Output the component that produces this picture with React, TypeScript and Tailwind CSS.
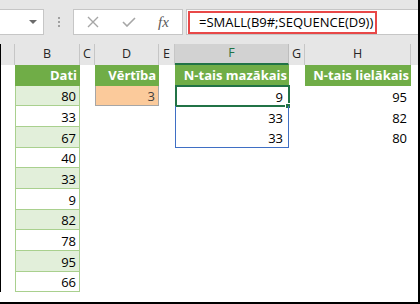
const cols = [
  { key: "A", w: "w-[14px]" },
  { key: "B", w: "w-[65px]" },
  { key: "C", w: "w-[15px]" },
  { key: "D", w: "w-[64px]" },
  { key: "E", w: "w-[16px]" },
  { key: "F", w: "w-[114px]" },
  { key: "G", w: "w-[16px]" },
  { key: "H", w: "w-[106px]" },
];

const dati = [80, 33, 67, 40, 33, 9, 82, 78, 95, 66];
const smallest = [9, 33, 33];
const largest = [95, 82, 80];

function Toolbar() {
  return (
    <div className="flex h-[44px] items-start bg-[#e6e6e6] pt-[9px]">
      <div className="relative flex h-[26px] w-[44px] items-center justify-end border border-l-0 border-[#c6c6c6] bg-white pr-[6px]">
        <span className="h-0 w-0 border-x-[4px] border-t-[4px] border-x-transparent border-t-[#6b6b6b]" />
      </div>
      <div className="ml-[14px] flex flex-col gap-[2px] pt-[8px]">
        <span className="h-[2px] w-[2px] bg-[#a0a0a0]" />
        <span className="h-[2px] w-[2px] bg-[#a0a0a0]" />
        <span className="h-[2px] w-[2px] bg-[#a0a0a0]" />
      </div>
      <div className="ml-[13px] flex h-[26px] w-[110px] items-center border border-[#c6c6c6] bg-white">
        <svg className="ml-[13px]" width="12" height="12" viewBox="0 0 12 12">
          <path d="M1 1L11 11M11 1L1 11" stroke="#a6a6a6" strokeWidth="1.4" fill="none" />
        </svg>
        <svg className="ml-[23px]" width="14" height="10" viewBox="0 0 14 10">
          <path d="M1 5L5 9L13 1" stroke="#a6a6a6" strokeWidth="1.6" fill="none" />
        </svg>
        <span className="ml-[22px] font-['Liberation_Serif',serif] text-[15px] italic leading-none text-[#595959]">
          fx
        </span>
      </div>
      <div className="ml-[3px] flex h-[26px] flex-1 items-stretch border border-r-0 border-[#c6c6c6] bg-white pb-[0px] pt-[1px]">
        <div className="ml-[1px] flex w-[189px] items-center border-2 border-[#e84848] pl-[9px] font-['Open_Sans',sans-serif] text-[13px] text-black">
          =SMALL(B9#;SEQUENCE(D9))
        </div>
      </div>
    </div>
  );
}

function ColumnHeaders() {
  return (
    <div className="flex h-[21px] bg-[#e6e6e6] font-['Open_Sans',sans-serif] text-[12.5px] text-[#262626]">
      {cols.map((c) =>
        c.key === "F" ? (
          <div
            key={c.key}
            className={`${c.w} flex items-center justify-center border-r border-b-2 border-r-[#bdbdbd] border-b-[#217346] bg-[#d2d2d2] text-[#217346]`}
          >
            {c.key}
          </div>
        ) : (
          <div key={c.key} className={`${c.w} flex items-center justify-center border-r border-[#c6c6c6]`}>
            {c.key === "A" ? "" : c.key}
          </div>
        )
      )}
      <div className="flex-1" />
    </div>
  );
}

function Num({ children }: { children: React.ReactNode }) {
  return <span className="pr-[3px] pt-[3px] leading-none">{children}</span>;
}

function Sheet() {
  const rows = Array.from({ length: 11 }, (_, i) => i);
  return (
    <div className="font-['Open_Sans',sans-serif] text-[13px] text-black">
      {rows.map((r) => {
        const light = r % 2 === 1;
        return (
          <div key={r} className="flex h-[20.67px]">
            <div className="w-[14px]" />
            {r === 0 ? (
              <div className="flex w-[65px] items-center justify-end bg-[#70ad47] pr-[3px] text-[13px] font-bold text-white">
                Dati
              </div>
            ) : (
              <div
                className={`flex w-[65px] items-center justify-end border-x border-b border-[#a9d08e] ${
                  light ? "bg-[#e2efda]" : "bg-white"
                }`}
              >
                <Num>{dati[r - 1]}</Num>
              </div>
            )}
            <div className="w-[15px]" />
            {r === 0 ? (
              <div className="flex w-[64px] items-center justify-end bg-[#70ad47] pr-[3px] text-[13px] font-bold text-white">
                Vērtība
              </div>
            ) : r === 1 ? (
              <div className="flex w-[64px] items-center justify-end border-x border-b border-[#a6a6a6] bg-[#fbca9b] text-[#404040]">
                <Num>3</Num>
              </div>
            ) : (
              <div className="w-[64px]" />
            )}
            <div className="w-[16px]" />
            {r === 0 ? (
              <div className="flex w-[114px] items-center justify-end bg-[#70ad47] pr-[2px] text-[13px] font-bold text-white">
                N-tais mazākais
              </div>
            ) : r <= 3 ? (
              <div
                className={`relative flex w-[114px] items-center justify-end border-l border-r-[1.5px] border-[#3f6fc4] pr-[2px] ${
                  r === 3 ? "border-b" : ""
                }`}
              >
                <Num>{smallest[r - 1]}</Num>
                {r === 1 && (
                  <>
                    <div className="absolute -left-px -right-[1.5px] -top-px bottom-[-1px] border-2 border-[#217346]" />
                    <div className="absolute -bottom-[3px] -right-[3px] h-[6px] w-[6px] border border-white bg-[#217346]" />
                  </>
                )}
              </div>
            ) : (
              <div className="w-[114px]" />
            )}
            <div className="w-[16px]" />
            {r === 0 ? (
              <div className="flex w-[106px] items-center justify-end bg-[#70ad47] pr-[2px] text-[13px] font-bold text-white">
                N-tais lielākais
              </div>
            ) : r <= 3 ? (
              <div className="flex w-[106px] items-center justify-end pr-[1px]">
                <Num>{largest[r - 1]}</Num>
              </div>
            ) : (
              <div className="w-[106px]" />
            )}
          </div>
        );
      })}
    </div>
  );
}

export default function App() {
  return (
    <div className="h-[304px] w-[420px] overflow-hidden border-r-2 border-b-2 border-black bg-white">
      <Toolbar />
      <div className="border-l border-black">
        <ColumnHeaders />
        <Sheet />
      </div>
    </div>
  );
}
